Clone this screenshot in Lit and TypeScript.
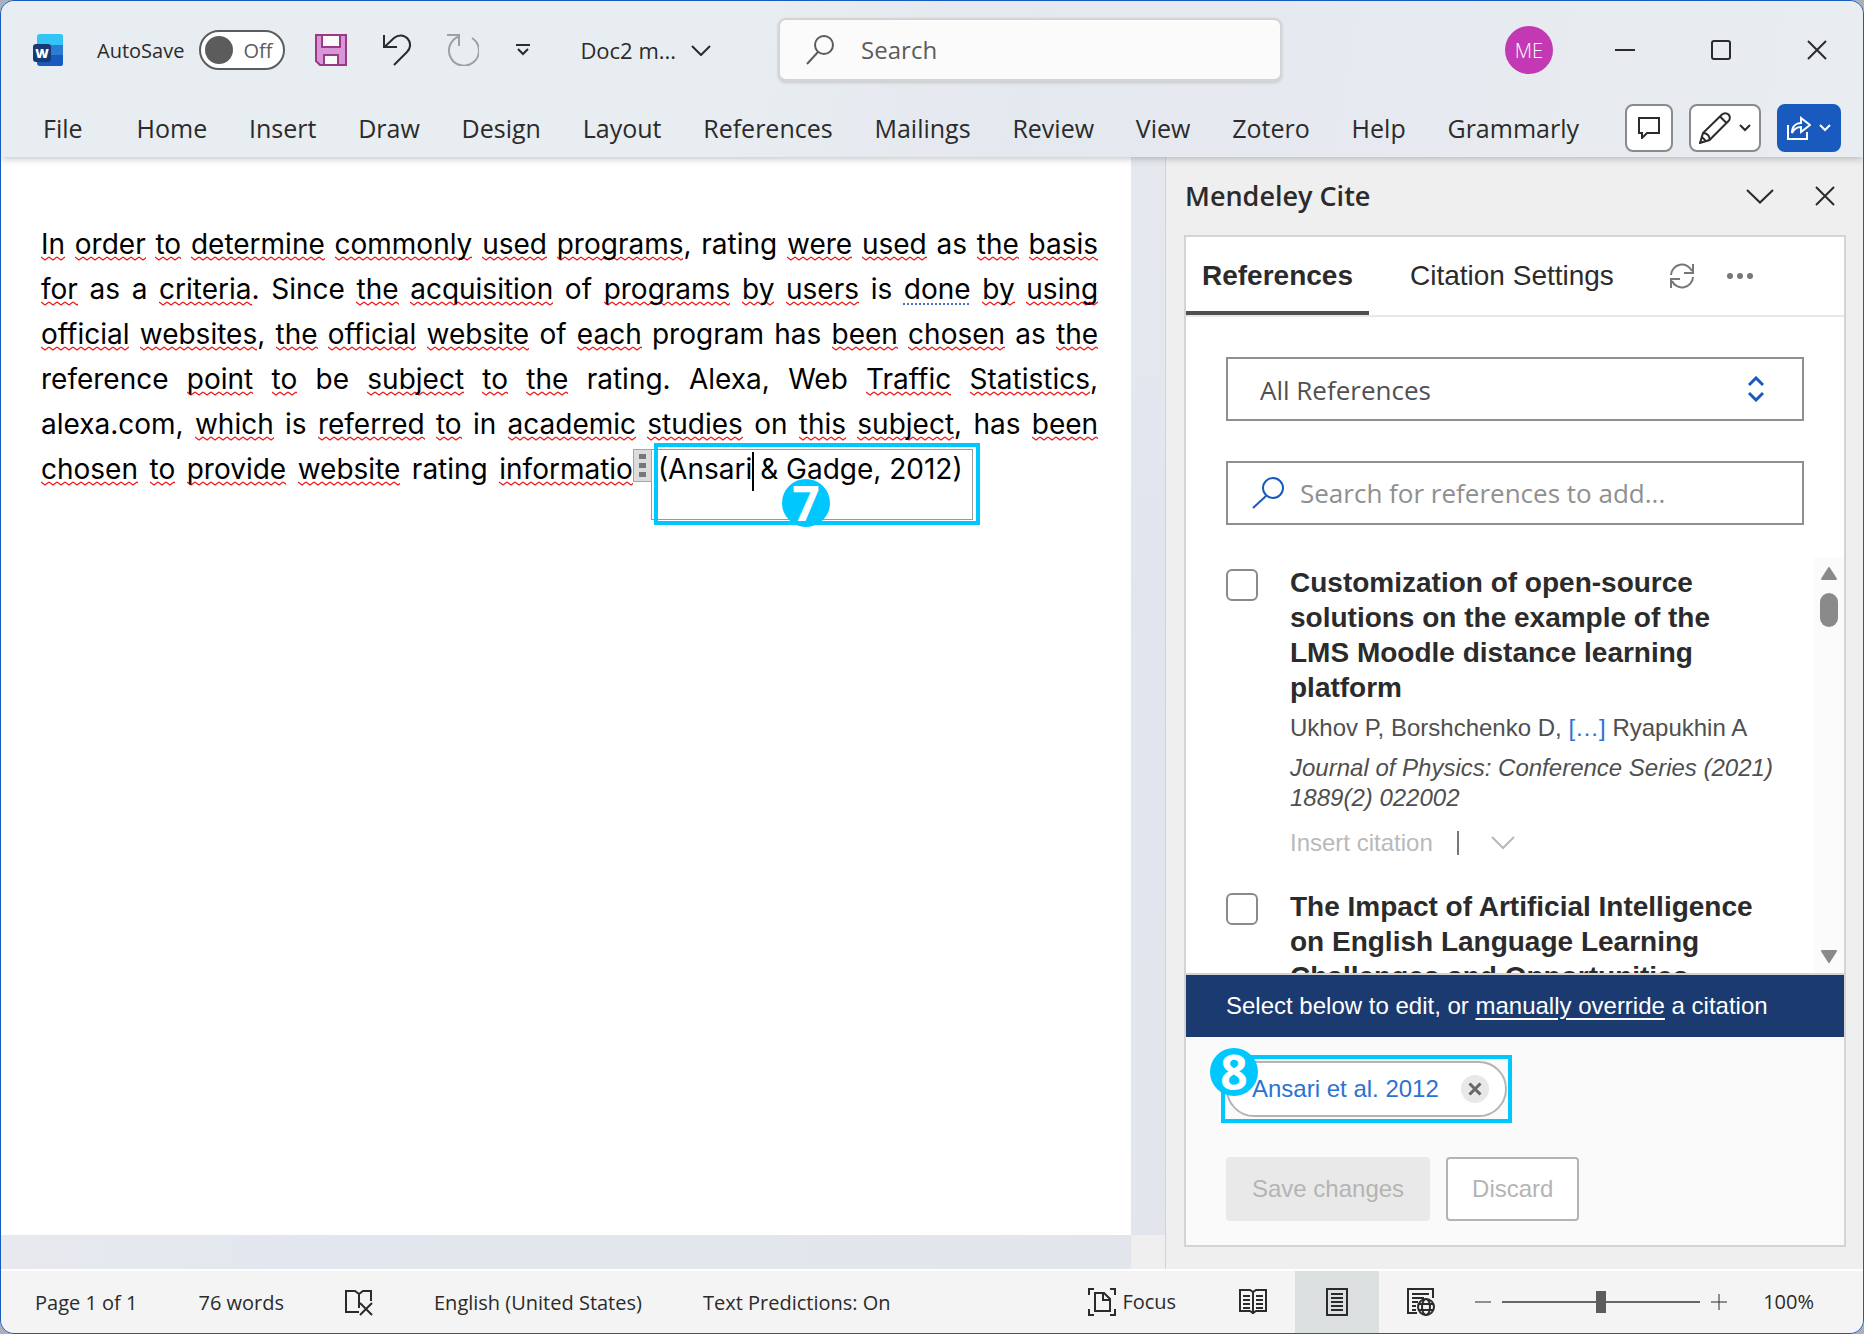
import { LitElement, html, svg, css, nothing, type TemplateResult } from "lit";
import { customElement, property, state } from "lit/decorators.js";
import { classMap } from "lit/directives/class-map.js";

/* ---------- icons ---------- */

const icon = (w: number, h: number, body: TemplateResult, sw = 2) => html`
  <svg width=${w} height=${h} viewBox="0 0 ${w} ${h}" fill="none" stroke="currentColor"
    stroke-width=${sw} aria-hidden="true">${body}</svg>`;

const icons = {
  word: icon(30, 32, svg`
    <g stroke="none">
      <path d="M7 0h21a2 2 0 0 1 2 2v9H4V3a3 3 0 0 1 3-3z" fill="#33c4f7"/>
      <path d="M4 11h26v10H4z" fill="#2b7cd3"/>
      <path d="M4 21h26v9a2 2 0 0 1-2 2H7a3 3 0 0 1-3-3z" fill="#185abd"/>
      <rect x="0" y="10" width="18" height="18" rx="3" fill="#173a75"/>
      <text x="9" y="24" text-anchor="middle" font-family="Open Sans, sans-serif" font-size="13"
        font-weight="800" fill="#fff">W</text>
    </g>`),
  save: icon(32, 32, svg`
    <path d="M1 1h30v30H5l-4-4z" fill="#d896d8" stroke="#9b3a83"/>
    <path d="M7 1h18v12H7zM9 31V21h14v10z" fill="#fafafa" stroke="#9b3a83"/>`),
  undo: icon(28, 32, svg`<path d="M1 1v12h13M1.500 13 11 4C15 .5 21 .5 24.500 4.500S28 14 24 18L11 31"/>`),
  redo: icon(32, 32, svg`<path d="M0 1h12v11M12 2.500A15 15 0 1 0 25 4"/>`),
  customize: icon(16, 12, svg`<path d="M1 1h14M3 5l5 5 5-5"/>`),
  chevron: icon(20, 11, svg`<path d="M1 1l9 9 9-9"/>`),
  paneChevron: icon(28, 15, svg`<path d="M1 1l13 12.500L27 1"/>`),
  smallChevron: icon(12, 8, svg`<path d="M1 1l5 5 5-5"/>`),
  citeChevron: icon(24, 14, svg`<path d="M1 1l11 11L23 1"/>`),
  search: icon(28, 30, svg`<circle cx="18" cy="10" r="9"/><path d="M12 17L1 29"/>`),
  searchBlue: icon(32, 32, svg`<circle cx="21" cy="11" r="10"/><path d="M14 19L1 31"/>`),
  minimize: icon(20, 20, svg`<path d="M0 10h20"/>`),
  maximize: icon(20, 20, svg`<rect x="1" y="1" width="18" height="18" rx="2"/>`),
  close: icon(20, 20, svg`<path d="M1 1l18 18M19 1L1 19"/>`),
  comment: icon(22, 22, svg`<path d="M1 1h20v15H9l-5 5v-5H1z"/>`),
  pencil: icon(32, 32, svg`
    <path d="M1 31l3-10L23 2.500a4.500 4.500 0 0 1 6.500 6.500L10.500 28zM4 21c4 0 7 3 6.500 7M21 4.500l6.500 6.500M1 31l2-6 4 4z"/>`),
  share: icon(24, 24, svg`
    <path d="M1 9v14h19v-7"/>
    <path d="M5 17C5 10 9 7 14 7V2l9 7-9 7v-5c-4 0-7 2-9 6z"/>`),
  refresh: icon(26, 26, svg`
    <path d="M2 12A11 11 0 0 1 23 8M24 1v9h-9M24 14A11 11 0 0 1 3 18M2 25v-9h9"/>`),
  more: icon(28, 8, svg`<g fill="currentColor" stroke="none">
    <circle cx="4" cy="4" r="3"/><circle cx="14" cy="4" r="3"/><circle cx="24" cy="4" r="3"/></g>`),
  updown: icon(18, 26, svg`<path d="M2 9l7-7 7 7M2 17l7 7 7-7"/>`, 3),
  remove: icon(14, 14, svg`<path d="M1.500 1.500l11 11M12.500 1.500l-11 11"/>`, 3),
  proof: icon(28, 26, svg`
    <path d="M14 22H1V1h9l4 3v14M14 4l4-3h8v10"/><path d="M15 13l12 12M27 13L15 25"/>`),
  focus: icon(28, 28, svg`
    <path d="M1 7V1h5M22 1h5v6M27 21v6h-5M6 27H1v-6"/>
    <path d="M7 5h9l6 6v12H7zM15 5v7h7"/>`),
  read: icon(28, 26, svg`
    <path d="M14 3l-3-2H1v21h10l3 2 3-2h10V1H17zM14 3v22"/>
    <path d="M4 7h7M4 11h7M4 15h7M4 19h7M17 7h7M17 11h7M17 15h7M17 19h7"/>`),
  print: icon(22, 28, svg`
    <path d="M1 1h20v26H1zM5 6h12M5 10h12M5 14h12M5 18h12M5 22h12"/>`),
  web: icon(28, 28, svg`
    <path d="M10 25H1V1h25v9M5 6h17M5 10h12M5 14h6M5 18h4M5 22h4"/>
    <circle cx="19" cy="19" r="8"/><ellipse cx="19" cy="19" rx="4" ry="8"/><path d="M12 16h14M12 22h14"/>`),
  minus: icon(16, 16, svg`<path d="M0 8h16"/>`, 1),
  plus: icon(16, 16, svg`<path d="M0 8h16M8 0v16"/>`, 1),
  arrowUp: icon(18, 14, svg`<path d="M2 13L9 2l7 11z" fill="#8a8a8a" stroke="#8a8a8a" stroke-linejoin="round"/>`),
  arrowDown: icon(18, 14, svg`<path d="M2 1l7 11 7-11z" fill="#8a8a8a" stroke="#8a8a8a" stroke-linejoin="round"/>`),
};

/* ---------- data ---------- */

const TABS = ["Home", "Insert", "Draw", "Design", "Layout", "References", "Mailings", "Review", "View",
  "Zotero", "Help", "Grammarly"];

/* "_" marks a word flagged by the speller, "~" one flagged by the grammar checker. */
const LINES = [
  "_In _order _to _determine _commonly _used _programs, rating _were _used as _the _basis",
  "_for as a _criteria. Since _the _acquisition of _programs _by _users is ~done _by _using",
  "_official _websites, _the _official _website of _each program has _been _chosen as _the",
  "reference _point _to be _subject _to _the rating. Alexa, Web _Traffic _Statistics,",
  "alexa.com, _which is _referred _to in _academic _studies on _this _subject, has _been",
];
const LAST_LINE = "_chosen _to _provide _website rating _informatio";

interface Reference {
  id: string;
  title: string;
  authors?: [string, string];
  source?: string;
}

const REFERENCES: Reference[] = [
  {
    id: "ukhov",
    title: "Customization of open-source solutions on the example of the LMS Moodle distance learning platform",
    authors: ["Ukhov P, Borshchenko D,", "Ryapukhin A"],
    source: "Journal of Physics: Conference Series (2021) 1889(2) 022002",
  },
  { id: "impact", title: "The Impact of Artificial Intelligence on English Language Learning Challenges and Opportunities" },
];

const reset = css`
  :host, * { box-sizing: border-box; }
  button, input, select { font: inherit; color: inherit; margin: 0; }
  button { background: none; border: 0; padding: 0; display: inline-flex; align-items: center; justify-content: center; }
  a { color: inherit; text-decoration: none; }
  svg { display: block; flex: none; }
  p, h1, h2, h3 { margin: 0; font: inherit; }
`;

/* ---------- title bar and ribbon ---------- */

@customElement("word-header")
class WordHeader extends LitElement {
  static styles = [reset, css`
    :host {
      display: block; position: relative; color: #2b2b2b;
      font-family: "Open Sans", "Noto Sans", sans-serif;
      background: linear-gradient(100deg, #e8edf1 0 40%, #e4e8ef 55%, #e6eaf0 70%, #e9edf1);
      box-shadow: 0 1px 8px rgba(0, 0, 0, .28);
    }
    .bar { display: flex; align-items: center; height: 98px; padding: 0 36px 0 32px; }
    .auto { display: flex; align-items: center; gap: 15px; font-size: 20px; margin-left: 34px; }
    .switch {
      width: 86px; height: 40px; border: 2px solid #5c5c5c; border-radius: 20px; background: #fff;
      gap: 10px; color: #5c5c5c; justify-content: flex-start; padding-left: 4px;
    }
    .knob { width: 28px; height: 28px; border-radius: 50%; background: #5c5c5c; }
    .quick { display: flex; align-items: center; gap: 36px; margin-left: 30px; }
    .redo { color: #a0a0a0; }
    .doc { font-size: 22px; gap: 15px; margin-left: 49px; }
    .search {
      flex: 1; display: flex; align-items: center; gap: 27px; height: 64px; padding: 0 26px;
      margin: 0 223px 0 67px; background: #fbfbfb; border: 2px solid #d4d4d4; border-bottom-width: 3px;
      border-radius: 8px; box-shadow: 0 1px 3px rgba(0, 0, 0, .15); color: #5c5c5c; font-size: 24px;
    }
    .search input { flex: 1; min-width: 0; border: 0; background: none; outline: 0; padding: 0; }
    input::placeholder { color: #5c5c5c; opacity: 1; }
    .avatar { width: 48px; height: 48px; border-radius: 50%; background: #c239b3; color: #fff; font-size: 20px; font-weight: 300; }
    .window { display: flex; gap: 76px; margin-left: 62px; }
    .ribbon { display: flex; align-items: center; height: 58px; padding: 0 22px 0 42px; font-size: 25px; }
    nav { flex: 1; display: flex; justify-content: space-between; margin: 0 46px 0 54px; }
    .actions { display: flex; gap: 16px; height: 48px; }
    .act { border: 2px solid #8a8a8a; border-radius: 8px; background: #fff; gap: 8px; }
    .comment { width: 48px; }
    .edit { width: 72px; }
    .share { width: 64px; background: #185abd; border-color: #185abd; color: #fff; }
  `];

  @state() private autoSave = false;

  render() {
    return html`
      <div class="bar">
        ${icons.word}
        <div class="auto">
          <span id="auto-label">AutoSave</span>
          <button class="switch" role="switch" aria-checked=${this.autoSave} aria-labelledby="auto-label"
            @click=${() => (this.autoSave = !this.autoSave)}>
            <span class="knob"></span>${this.autoSave ? "On" : "Off"}
          </button>
        </div>
        <div class="quick">
          <button aria-label="Save">${icons.save}</button>
          <button aria-label="Undo">${icons.undo}</button>
          <button class="redo" aria-label="Redo">${icons.redo}</button>
          <button aria-label="Customize toolbar">${icons.customize}</button>
        </div>
        <button class="doc">Doc2 m... ${icons.chevron}</button>
        <label class="search">${icons.search}<input type="text" placeholder="Search" aria-label="Search"></label>
        <button class="avatar" aria-label="Account">ME</button>
        <div class="window">
          <button aria-label="Minimize">${icons.minimize}</button>
          <button aria-label="Maximize">${icons.maximize}</button>
          <button aria-label="Close">${icons.close}</button>
        </div>
      </div>
      <div class="ribbon">
        <a href="#file">File</a>
        <nav>${TABS.map((t) => html`<a href="#${t.toLowerCase()}">${t}</a>`)}</nav>
        <div class="actions">
          <button class="act comment" aria-label="Comments">${icons.comment}</button>
          <button class="act edit" aria-label="Editing mode">${icons.pencil}${icons.smallChevron}</button>
          <button class="act share" aria-label="Share">${icons.share}${icons.smallChevron}</button>
        </div>
      </div>`;
  }
}

/* ---------- document ---------- */

@customElement("word-document")
class WordDocument extends LitElement {
  static styles = [reset, css`
    :host { display: block; background: #fff; padding: 65px 33px 0 40px; color: #000;
      font: 28px/45px Inter, "Liberation Sans", sans-serif; }
    .line { display: block; text-align: justify; text-align-last: justify; white-space: nowrap; }
    .spell {
      background: url("data:image/svg+xml,%3Csvg xmlns='http://www.w3.org/2000/svg' width='8' height='5'%3E%3Cpath d='M0 1L4 4L8 1' fill='none' stroke='%23f01414' stroke-width='1.200'/%3E%3C/svg%3E") 0 100% / 8px 5px repeat-x;
    }
    .grammar { text-decoration: underline dotted #4a6fd0 2px; text-underline-offset: 4px; text-decoration-skip-ink: none; }
    .last { display: flex; }
    .start { flex: 0 0 56%; }
    .cite { position: relative; padding-left: 25px; white-space: nowrap; }
    .frame { position: absolute; left: 18px; right: -10px; top: 2px; height: 71px; border: 1px solid #999; }
    .handle {
      position: absolute; left: 0; top: 2px; width: 19px; height: 33px; background: #dcdcdc;
      border: 1px solid #a6a6a6; display: flex; flex-direction: column; align-items: center; justify-content: space-evenly;
    }
    .dot { width: 7px; height: 5px; background: #777; }
    .mark { position: absolute; left: 21px; right: -17px; top: -4px; height: 82px; border: 4px solid #00c8ff; }
    .caret { display: inline-block; width: 2px; height: 39px; margin-right: -2px; background: #000; vertical-align: middle; }
    .badge {
      position: absolute; left: 149px; top: 32px; width: 48px; height: 48px; border-radius: 50%;
      background: #00c8ff; color: #fff; font: 700 48px/48px "Open Sans", sans-serif; text-align: center;
    }
  `];

  private words(line: string) {
    return line.split(" ").map((w, i) => {
      const gap = i ? " " : "";
      if (w[0] !== "_" && w[0] !== "~") return html`${gap}${w}`;
      const [, kind, word, tail] = w.match(/^(.)([A-Za-z]+)(.*)$/)!;
      return html`${gap}<span class=${kind === "_" ? "spell" : "grammar"}>${word}</span>${tail}`;
    });
  }

  render() {
    return html`
      <p>
        ${LINES.map((l) => html`<span class="line">${this.words(l)}</span>`)}
        <span class="last">
          <span class="line start">${this.words(LAST_LINE)}</span>
          <span class="cite"><span class="frame"></span><span class="handle"><i class="dot"></i><i class="dot"></i><i class="dot"></i></span>(Ansari<span class="caret"></span> &amp; Gadge, 2012)<span class="mark"></span><span class="badge">7</span></span>
        </span>
      </p>`;
  }
}

/* ---------- one entry in the reference list ---------- */

@customElement("reference-item")
class ReferenceItem extends LitElement {
  static styles = [reset, css`
    :host { display: flex; gap: 32px; color: #4f4f4f; font: 24px/30px "Liberation Sans", Arial, sans-serif; }
    input { appearance: none; flex: none; width: 32px; height: 32px; margin-top: 4px; background: #fff;
      border: 2px solid #8a8a8a; border-radius: 6px; }
    input:checked { background: #185abd; }
    .title { display: block; font-size: 28px; line-height: 35px; font-weight: 700; color: #2b2b2b; }
    .authors { margin-top: 8px; }
    .authors a { color: #2a72d4; }
    .source { margin-top: 10px; font-style: italic; }
    .row { display: flex; align-items: center; margin-top: 15px; color: #b9b9b9; }
    .rule { width: 2px; height: 24px; background: #777; margin: 0 32px 0 24px; }
  `];

  @property({ attribute: false }) ref!: Reference;

  render() {
    const { id, title, authors, source } = this.ref;
    return html`
      <input type="checkbox" id=${id}>
      <div>
        <label class="title" for=${id}>${title}</label>
        ${authors ? html`
          <p class="authors">${authors[0]} <a href="#authors">[…]</a> ${authors[1]}</p>
          <p class="source">${source}</p>
          <div class="row">
            <button disabled>Insert citation</button><span class="rule"></span>
            <button disabled aria-label="More insert options">${icons.citeChevron}</button>
          </div>` : nothing}
      </div>`;
  }
}

/* ---------- citation pane ---------- */

@customElement("cite-pane")
class CitePane extends LitElement {
  static styles = [reset, css`
    :host {
      display: flex; flex-direction: column; min-height: 0; background: #efefef; color: #2b2b2b;
      border-left: 1px solid #d0d2d6; padding: 0 17px 22px 18px;
      font: 24px/30px "Liberation Sans", Arial, sans-serif;
    }
    .head { display: flex; align-items: center; height: 78px; padding: 0 11px 0 1px; }
    .head h1 { flex: 1; font: 600 27px/36px "Open Sans", "Noto Sans", sans-serif; }
    .head div { display: flex; align-items: center; gap: 41px; }
    .card { flex: 1; min-height: 0; display: flex; flex-direction: column; border: 2px solid #d4d4d4; background: #fff; }
    .tabs { display: flex; align-items: center; flex: none; height: 80px; border-bottom: 2px solid #e8e8e8; font-size: 28px; color: #777; }
    .tab { height: 78px; color: #2b2b2b; padding: 0 16px; }
    .tab + .tab { margin-left: 25px; margin-right: 39px; }
    .tab.on { font-weight: 700; border-bottom: 4px solid #505050; padding-top: 4px; }
    .more { margin-left: 31px; }
    .fields { display: flex; flex-direction: column; gap: 40px; padding: 40px 40px 32px;
      font-family: "Open Sans", "Noto Sans", sans-serif; font-size: 26px; line-height: 36px; }
    .field { display: flex; align-items: center; height: 64px; border: 2px solid #8f8f8f; color: #505050; padding: 0 37px 0 24px; gap: 16px; }
    .blue { color: #185abd; display: flex; }
    .field select, .field input { flex: 1; min-width: 0; appearance: none; border: 0; background: none; outline: 0; padding: 0; }
    .field select { padding: 2px 0 0 8px; }
    .field input::placeholder { color: #8f8f8f; opacity: 1; }
    .list { flex: 1; min-height: 0; display: flex; overflow: hidden; }
    .items { flex: 1; display: flex; flex-direction: column; gap: 31px; padding: 8px 38px 0 40px; }
    .track { flex: none; width: 30px; background: #fbfbfb; display: flex; flex-direction: column; align-items: center; padding: 9px 0; }
    .thumb { width: 18px; height: 34px; border-radius: 9px; background: #8a8a8a; margin: 13px 0 auto; }
    .notice { flex: none; background: #1b3b70; color: #fff; border-top: 2px solid #d4d4d4; height: 64px; padding: 0 40px; line-height: 62px; }
    .notice a { text-decoration: underline 2px; text-underline-offset: 4px; }
    .foot { flex: none; background: #fafafa; padding: 24px 40px; display: flex; flex-direction: column; align-items: flex-start; gap: 40px; }
    .chip { position: relative; display: flex; align-items: center; height: 56px; gap: 22px; padding: 0 16px 0 24px;
      border: 2px solid #b4b4b4; border-radius: 28px; background: #fff; color: #2a72d4; }
    .remove { width: 28px; height: 28px; border-radius: 50%; background: #e8e8e8; color: #666; }
    .mark { position: absolute; inset: -8px -7px; border: 4px solid #00c8ff; pointer-events: none; }
    .badge { position: absolute; left: -18px; top: -15px; width: 48px; height: 48px; border-radius: 50%;
      background: #00c8ff; color: #fff; font: 700 48px/48px "Open Sans", sans-serif; text-align: center; }
    .buttons { display: flex; gap: 16px; }
    .btn { height: 64px; padding: 0 24px; border: 2px solid #e9e9e9; border-radius: 4px; background: #e9e9e9; color: #b4b4b4; }
    .ghost { background: #fff; border-color: #b4b4b4; }
  `];

  @state() private tab = 0;

  render() {
    return html`
      <div class="head">
        <h1>Mendeley Cite</h1>
        <div>
          <button aria-label="Pane options">${icons.paneChevron}</button>
          <button aria-label="Close pane">${icons.close}</button>
        </div>
      </div>
      <section class="card">
        <div class="tabs">
          ${["References", "Citation Settings"].map((t, i) => html`
            <button class=${classMap({ tab: true, on: this.tab === i })} @click=${() => (this.tab = i)}>${t}</button>`)}
          <button aria-label="Sync">${icons.refresh}</button>
          <button class="more" aria-label="More">${icons.more}</button>
        </div>
        <div class="fields">
          <label class="field">
            <select aria-label="Collection"><option>All References</option></select>
            <span class="blue">${icons.updown}</span>
          </label>
          <label class="field">
            <span class="blue">${icons.searchBlue}</span>
            <input type="text" placeholder="Search for references to add..." aria-label="Search for references">
          </label>
        </div>
        <div class="list">
          <div class="items">${REFERENCES.map((r) => html`<reference-item .ref=${r}></reference-item>`)}</div>
          <div class="track">${icons.arrowUp}<span class="thumb"></span>${icons.arrowDown}</div>
        </div>
        <p class="notice">Select below to edit, or <a href="#override">manually override</a> a citation</p>
        <div class="foot">
          <div class="chip">
            Ansari et al. 2012
            <button class="remove" aria-label="Remove citation">${icons.remove}</button>
            <span class="mark"></span><span class="badge">8</span>
          </div>
          <div class="buttons">
            <button class="btn" disabled>Save changes</button>
            <button class="btn ghost" disabled>Discard</button>
          </div>
        </div>
      </section>`;
  }
}

/* ---------- status bar ---------- */

@customElement("status-bar")
class StatusBar extends LitElement {
  static styles = [reset, css`
    :host {
      display: flex; align-items: center; height: 64px; border-top: 2px solid #fff; background: #f4f4f4;
      padding: 0 49px 0 34px; color: #2b2b2b; font: 20px/28px "Open Sans", "Noto Sans", sans-serif;
    }
    .info { flex: 1; display: flex; align-items: center; gap: 61px; padding-top: 2px; white-space: nowrap; }
    .views { display: flex; align-items: center; align-self: stretch; }
    .focus { gap: 6px; margin-right: 35px; }
    .view { width: 84px; height: 100%; }
    .on { background: #dde0e0; }
    .zoom { display: flex; align-items: center; gap: 11px; margin: 0 36px 0 12px; }
    input {
      appearance: none; width: 198px; height: 24px; background: linear-gradient(#666, #666) center / 100% 2px no-repeat;
    }
    input::-webkit-slider-thumb { appearance: none; width: 10px; height: 22px; background: #5c5c5c; }
  `];

  render() {
    return html`
      <div class="info">
        <span>Page 1 of 1</span><span>76 words</span>
        <button aria-label="Proofing">${icons.proof}</button>
        <span>English (United States)</span><span>Text Predictions: On</span>
      </div>
      <div class="views">
        <button class="focus">${icons.focus}Focus</button>
        <button class="view" aria-label="Read mode">${icons.read}</button>
        <button class="view on" aria-label="Print layout">${icons.print}</button>
        <button class="view" aria-label="Web layout">${icons.web}</button>
      </div>
      <div class="zoom">
        <button aria-label="Zoom out">${icons.minus}</button>
        <input type="range" min="0" max="200" value="100" aria-label="Zoom">
        <button aria-label="Zoom in">${icons.plus}</button>
      </div>
      <span>100%</span>`;
  }
}

/* ---------- window ---------- */

@customElement("app-root")
class AppRoot extends LitElement {
  static styles = [reset, css`
    :host { display: block; height: 100vh; min-height: 900px; background: #a9b0bd; }
    .window { display: flex; flex-direction: column; height: 100%; border: 1px solid #185abd; border-radius: 14px; overflow: hidden; }
    word-header { z-index: 1; flex: none; }
    .main { flex: 1; min-height: 0; display: grid; grid-template-columns: 1130fr 34px 698fr; grid-template-rows: minmax(0, 1fr) 34px; }
    .side { background: linear-gradient(#e5e9ee, #e1e5ee 40%, #e2e6ec); }
    .base { grid-row: 2; background: linear-gradient(90deg, #e7e9ee, #e2e6ee 30%, #e2e6ec); }
    .corner { background: #efefef; }
    cite-pane { grid-column: 3; grid-row: 1 / 3; }
    status-bar { flex: none; }
  `];

  render() {
    return html`
      <div class="window">
        <word-header></word-header>
        <main class="main">
          <word-document></word-document>
          <div class="side"></div>
          <cite-pane></cite-pane>
          <div class="base"></div>
          <div class="corner"></div>
        </main>
        <status-bar></status-bar>
      </div>`;
  }
}
